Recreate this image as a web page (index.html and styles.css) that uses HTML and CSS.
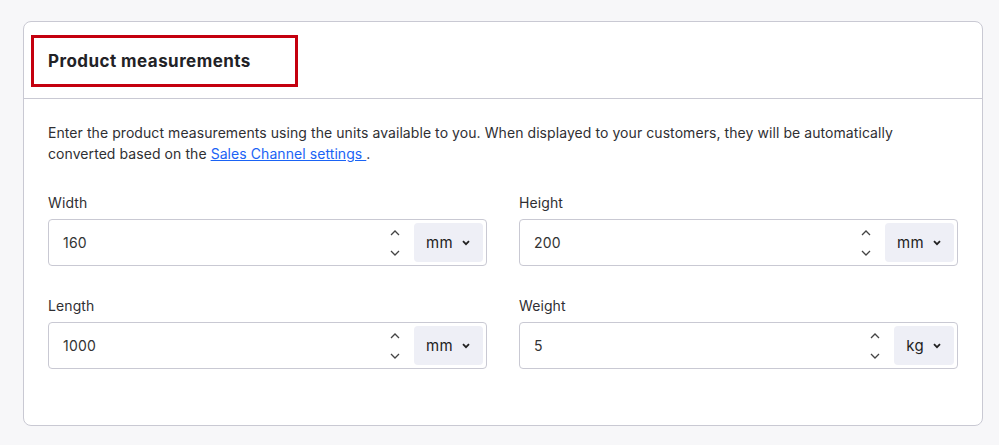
FILE: index.html
```html
<!DOCTYPE html>
<html>
<head>
<meta charset="utf-8">
<link rel="stylesheet" href="styles.css">
</head>
<body>
<div class="card">
  <div class="card-header">
    <div class="title-box"><h2 class="title">Product measurements</h2></div>
  </div>
  <div class="card-body">
    <p class="desc">Enter the product measurements using the units available to you. When displayed to your customers, they will be automatically converted based on the <a class="link" href="#">Sales Channel settings </a>.</p>
    <div class="grid">
      <div class="field">
        <label class="label">Width</label>
        <div class="input">
          <span class="value">160</span>
          <span class="spin">
            <svg width="10" height="6" viewBox="0 0 10 6"><path d="M1 5 L5 1 L9 5" fill="none" stroke="#444" stroke-width="1.3"/></svg>
            <svg width="10" height="6" viewBox="0 0 10 6"><path d="M1 1 L5 5 L9 1" fill="none" stroke="#444" stroke-width="1.3"/></svg>
          </span>
          <span class="unit">mm <svg width="8" height="6" viewBox="0 0 8 6"><path d="M1 1.2 L4 4.2 L7 1.2" fill="none" stroke="#222" stroke-width="1.8"/></svg></span>
        </div>
      </div>
      <div class="field">
        <label class="label">Height</label>
        <div class="input">
          <span class="value">200</span>
          <span class="spin">
            <svg width="10" height="6" viewBox="0 0 10 6"><path d="M1 5 L5 1 L9 5" fill="none" stroke="#444" stroke-width="1.3"/></svg>
            <svg width="10" height="6" viewBox="0 0 10 6"><path d="M1 1 L5 5 L9 1" fill="none" stroke="#444" stroke-width="1.3"/></svg>
          </span>
          <span class="unit">mm <svg width="8" height="6" viewBox="0 0 8 6"><path d="M1 1.2 L4 4.2 L7 1.2" fill="none" stroke="#222" stroke-width="1.8"/></svg></span>
        </div>
      </div>
      <div class="field">
        <label class="label">Length</label>
        <div class="input">
          <span class="value">1000</span>
          <span class="spin">
            <svg width="10" height="6" viewBox="0 0 10 6"><path d="M1 5 L5 1 L9 5" fill="none" stroke="#444" stroke-width="1.3"/></svg>
            <svg width="10" height="6" viewBox="0 0 10 6"><path d="M1 1 L5 5 L9 1" fill="none" stroke="#444" stroke-width="1.3"/></svg>
          </span>
          <span class="unit">mm <svg width="8" height="6" viewBox="0 0 8 6"><path d="M1 1.2 L4 4.2 L7 1.2" fill="none" stroke="#222" stroke-width="1.8"/></svg></span>
        </div>
      </div>
      <div class="field">
        <label class="label">Weight</label>
        <div class="input">
          <span class="value">5</span>
          <span class="spin">
            <svg width="10" height="6" viewBox="0 0 10 6"><path d="M1 5 L5 1 L9 5" fill="none" stroke="#444" stroke-width="1.3"/></svg>
            <svg width="10" height="6" viewBox="0 0 10 6"><path d="M1 1 L5 5 L9 1" fill="none" stroke="#444" stroke-width="1.3"/></svg>
          </span>
          <span class="unit">kg <svg width="8" height="6" viewBox="0 0 8 6"><path d="M1 1.2 L4 4.2 L7 1.2" fill="none" stroke="#222" stroke-width="1.8"/></svg></span>
        </div>
      </div>
    </div>
  </div>
</div>
</body>
</html>
```
FILE: styles.css
```css
html, body {
  margin: 0;
  padding: 0;
  background: #f7f7f9;
  font-family: Inter, "Liberation Sans", sans-serif;
  color: #2b2b2f;
}
.card {
  margin: 21px 0 0 23px;
  width: 960px;
  height: 405px;
  box-sizing: border-box;
  background: #fff;
  border: 1px solid #c9c9d3;
  border-radius: 8px;
}
.card-header {
  height: 77px;
  box-sizing: border-box;
  border-bottom: 1px solid #c9c9d3;
  padding: 13px 0 0 7px;
}
.title-box {
  width: 267px;
  height: 52px;
  box-sizing: border-box;
  border: 3px solid #c4000f;
  padding-left: 14px;
  display: flex;
  align-items: center;
}
.title {
  margin: 0;
  font-size: 17px;
  font-weight: 700;
  color: #222226;
  letter-spacing: 0.45px;
}
.card-body {
  padding: 23px 24px 24px 24px;
}
.desc {
  margin: 0 0 29px 0;
  max-width: 860px;
  font-size: 14px;
  line-height: 21px;
  letter-spacing: 0.07px;
  color: #2f2f33;
}
.link {
  color: #1a63f5;
  text-decoration: underline;
}
.grid {
  display: grid;
  grid-template-columns: 1fr 1fr;
  column-gap: 32px;
  row-gap: 30px;
}
.field {
  display: flex;
  flex-direction: column;
}
.label {
  font-size: 14px;
  line-height: 20px;
  margin-bottom: 6px;
  letter-spacing: 0.1px;
  color: #2f2f33;
}
.input {
  height: 47px;
  box-sizing: border-box;
  border: 1px solid #c9c9d3;
  border-radius: 4px;
  display: flex;
  align-items: center;
  padding: 3px 3px 3px 14px;
}
.value {
  flex: 1;
  font-size: 14px;
  letter-spacing: 0.2px;
  color: #333;
}
.spin {
  display: flex;
  flex-direction: column;
  align-items: center;
  justify-content: space-between;
  height: 26px;
  width: 10px;
  margin-right: 14px;
}
.spin svg { display: block; }
.unit {
  height: 39px;
  box-sizing: border-box;
  background: #eeeff6;
  border-radius: 4px;
  display: flex;
  align-items: center;
  gap: 9px;
  padding: 0 13px 0 12px;
  font-size: 15px;
  letter-spacing: 0.3px;
  color: #222;
}
.unit svg { display: block; margin-top: 1px; }
```
